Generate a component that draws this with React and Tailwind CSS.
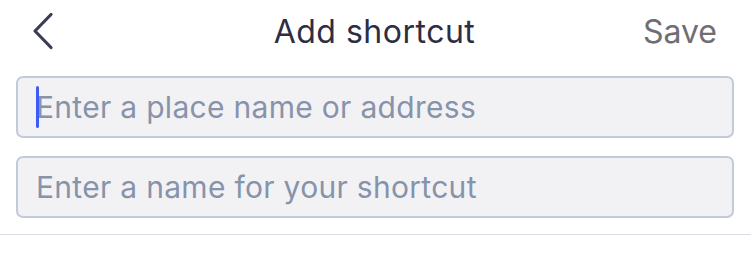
export default function App() {
  return (
    <div className="w-[751px] h-[264px] bg-white font-['Inter',sans-serif] flex flex-col">
      <div className="h-[62px] mt-[1px] relative flex items-center justify-center">
        <button className="absolute left-[30px] top-[11px] w-[26px] h-[38px] flex items-center justify-center">
          <svg width="24" height="38" viewBox="0 0 24 38" fill="none">
            <path d="M20 2.5 L4 19 L20 35.5" stroke="#3a3d54" strokeWidth="3.2" strokeLinecap="round" strokeLinejoin="round" />
          </svg>
        </button>
        <h1 className="text-[32px] leading-none text-[#2d2e43] tracking-[0.5px] ml-[-2px]">Add shortcut</h1>
        <span className="absolute right-[34px] text-[32px] leading-none text-[#6e6e73]">Save</span>
      </div>
      <div className="pl-[16px] pr-[17px] mt-[13px] flex flex-col gap-[18px]">
        <div className="h-[62px] rounded-[7px] border-2 border-[#c3cad9] bg-[#f2f2f5] flex items-center pl-[18px] relative">
          <span className="w-[3px] h-[42px] bg-[#3d5cf5] rounded-[2px] absolute left-[18px]" />
          <span className="text-[30px] text-[#8793aa] leading-none tracking-[0.3px]">Enter a place name or address</span>
        </div>
        <div className="h-[62px] rounded-[7px] border-2 border-[#c3cad9] bg-[#f2f2f5] flex items-center pl-[18px]">
          <span className="text-[30px] text-[#8793aa] leading-none tracking-[0.3px]">Enter a name for your shortcut</span>
        </div>
      </div>
      <div className="mt-[16px] h-[1px] bg-[#dcdce6]" />
    </div>
  )
}
